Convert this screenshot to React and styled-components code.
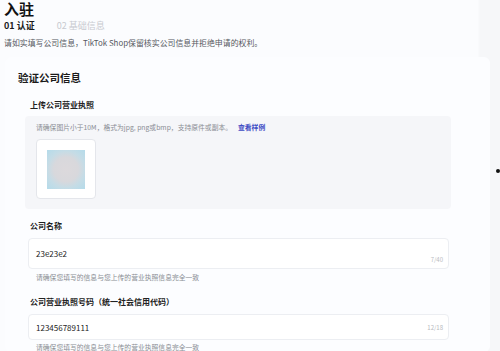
import React from 'react';
import styled, { createGlobalStyle } from 'styled-components';

const Global = createGlobalStyle`
  html, body {
    margin: 0;
    padding: 0;
    background: #f8f9fb;
    font-family: "Noto Sans CJK SC", "Noto Sans", sans-serif;
    overflow: hidden;
  }
`;

const Page = styled.div`
  width: 500px;
  height: 351px;
  position: relative;
  overflow: hidden;
  background: linear-gradient(90deg, #fbfcfe 0%, #fbfcfe 95.5%, #f6f7f9 96%, #f6f7f9 100%);
`;

const Header = styled.div`
  padding-left: 4px;
`;

const Title = styled.h1`
  margin: 0;
  font-size: 15px;
  line-height: 18px;
  font-weight: 700;
  color: #111;
`;

const Tabs = styled.div`
  display: flex;
  gap: 22px;
  margin-top: 3px;
`;

const Tab = styled.span`
  font-size: 9px;
  line-height: 10px;
  font-weight: ${p => (p.active ? 700 : 400)};
  color: ${p => (p.active ? '#1a1a1a' : '#c8cad0')};
`;

const Desc = styled.p`
  margin: 7px 0 0;
  font-size: 7.9px;
  line-height: 10px;
  color: #555860;
`;

const Card = styled.div`
  margin: 9px 0 0 5px;
  width: 472px;
  padding: 14px 0 0 13px;
  background: #fcfdff;
  border-radius: 6px;
`;

const CardTitle = styled.h2`
  margin: 0;
  font-size: 10.5px;
  line-height: 14px;
  font-weight: 700;
  color: #1a1a1a;
`;

const Section = styled.div`
  padding-left: 12px;
  margin-top: ${p => p.top || 0}px;
`;

const Label = styled.div`
  font-size: 8px;
  line-height: 12px;
  font-weight: 700;
  color: #222;
`;

const UploadBox = styled.div`
  margin: 5px 0 0 -5px;
  width: 415px;
  padding: 7px 0 10px 11px;
  background: #f5f6f9;
  border-radius: 4px;
`;

const Hint = styled.div`
  font-size: 6.8px;
  line-height: 9px;
  color: #8a8d94;
  margin-top: ${p => p.top || 0}px;
  padding-left: ${p => p.indent || 0}px;
`;

const Link = styled.span`
  color: #3d4bc4;
  font-weight: 700;
  margin-left: 6px;
`;

const Thumb = styled.div`
  margin-top: 7px;
  width: 58px;
  height: 58px;
  border: 1px solid #e4e6eb;
  border-radius: 4px;
  background: #fff;
  display: flex;
  align-items: center;
  justify-content: center;
`;

const Preview = styled.div`
  width: 38px;
  height: 39px;
  background: radial-gradient(circle at 50% 50%, #dcd9dc 0%, #d8d8dc 45%, #c5dce6 68%, #b4dbea 100%);
`;

const Input = styled.div`
  margin: 6px 0 0 -2px;
  width: 421px;
  height: ${p => p.h}px;
  border: 1px solid #eceef2;
  border-radius: 4px;
  background: #fff;
  position: relative;
  display: flex;
  align-items: center;
  padding-left: 7px;
  box-sizing: border-box;
  font-size: 8px;
  color: #222;
`;

const Counter = styled.span`
  position: absolute;
  right: 5px;
  ${p => (p.low ? 'bottom: 4px;' : 'top: 50%; transform: translateY(-50%);')}
  font-size: 6px;
  color: #b8bac0;
`;

const Dot = styled.div`
  position: absolute;
  left: 496px;
  top: 169px;
  width: 4px;
  height: 4px;
  border-radius: 50%;
  background: #111;
`;

export default function App() {
  return (
    <Page>
      <Global />
      <Header>
        <Title>入驻</Title>
        <Tabs>
          <Tab active>01 认证</Tab>
          <Tab>02 基础信息</Tab>
        </Tabs>
        <Desc>请如实填写公司信息，TikTok Shop保留核实公司信息并拒绝申请的权利。</Desc>
      </Header>
      <Card>
        <CardTitle>验证公司信息</CardTitle>
        <Section top={14}>
          <Label>上传公司营业执照</Label>
          <UploadBox>
            <Hint>
              请确保图片小于10M，格式为jpg, png或bmp，支持原件或副本。
              <Link>查看样例</Link>
            </Hint>
            <Thumb>
              <Preview />
            </Thumb>
          </UploadBox>
        </Section>
        <Section top={11}>
          <Label>公司名称</Label>
          <Input h={31}>
            23e23e2
            <Counter low>7/40</Counter>
          </Input>
          <Hint indent={6} top={4}>请确保您填写的信息与您上传的营业执照信息完全一致</Hint>
        </Section>
        <Section top={14}>
          <Label>公司营业执照号码（统一社会信用代码）</Label>
          <Input h={26}>
            123456789111
            <Counter>12/18</Counter>
          </Input>
          <Hint indent={6} top={3}>请确保您填写的信息与您上传的营业执照信息完全一致</Hint>
        </Section>
      </Card>
      <Dot />
    </Page>
  );
}
